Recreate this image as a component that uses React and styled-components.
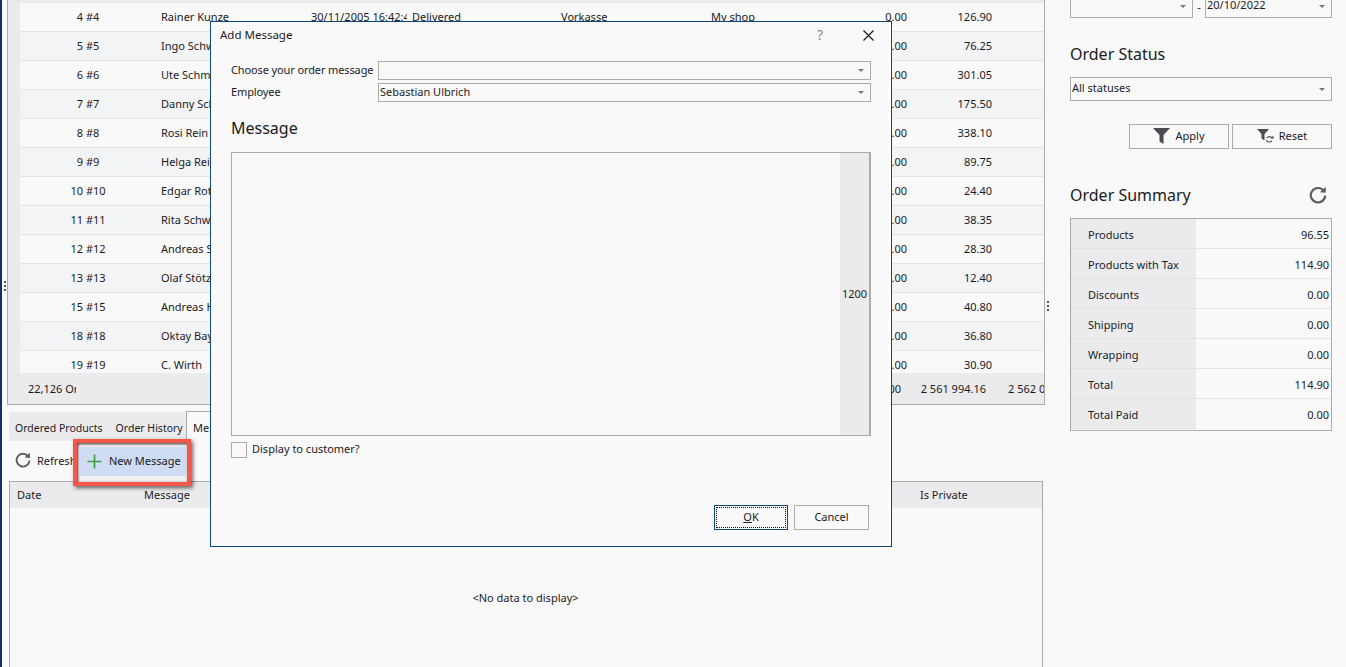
import React from 'react'
import styled, { createGlobalStyle } from 'styled-components'

const GlobalStyle = createGlobalStyle`
    html, body {
        margin: 0;
        height: 100%;
        overflow: hidden;
        background: #f9f9f9;
    }
    body {
        font-family: "Noto Sans", "Open Sans", sans-serif;
        font-size: 11px;
        color: #1b1b1f;
    }
`

const Shell = styled.div`
    position: relative;
    display: flex;
    width: 1346px;
    height: 667px;
    box-sizing: border-box;
    border-left: 2px solid #10305f;
    overflow: hidden;
`
const Gutter = styled.div`
    flex: none;
    width: ${({size})=>size}px;
    display: flex;
    justify-content: ${({align})=>align};
    padding-top: ${({gripTop})=>gripTop}px;
    box-sizing: border-box;
`
const Grip = styled.div`
    width: 2px;
    height: 10px;
    margin-left: ${({offset})=>offset || 0}px;
    background: repeating-linear-gradient(to bottom, #55555a 0 2px, transparent 2px 4px);
`
const Main = styled.div`
    flex: none;
    width: 1038px;
    display: flex;
    flex-direction: column;
`
const GridPanel = styled.div`
    height: 405px;
    flex: none;
    box-sizing: border-box;
    border: 1px solid #ababab;
    border-top: 0;
    background: #ebebed;
    display: flex;
    flex-direction: column;
    padding-top: 3px;
`
const GridRows = styled.div`
    height: 370px;
    flex: none;
    margin-left: 12px;
    overflow: hidden;
`
const Row = styled.div`
    display: grid;
    grid-template-columns: 136px 150px 101px 149px 150px 120px 85px 85px 1fr;
    height: 29px;
    box-sizing: border-box;
    align-items: center;
    padding-bottom: 1px;
    border-bottom: 1px solid #e2e2e2;
    background: ${({even})=>even ? '#f3f4f6' : '#f9f9f9'};
`
const Cell = styled.div`
    white-space: nowrap;
    overflow: hidden;
    padding: 0 ${({right})=>right ? '4px' : '0'} 0 ${({right})=>right ? '0' : '5px'};
    text-align: ${({right})=>right ? 'right' : 'left'};
`
const IdCell = styled.div`
    text-align: center;
    white-space: nowrap;
`
const GridFooter = styled.div`
    flex: 1;
    display: grid;
    grid-template-columns: 48px 825px 85px 22px 1fr;
    align-items: center;
    padding-left: 20px;
    white-space: nowrap;
`
const FooterCell = styled.div`
    overflow: hidden;
    text-align: ${({right})=>right ? 'right' : 'left'};
`
const TabBar = styled.div`
    display: flex;
    margin: 7px 0 0 2px;
    height: 29px;
    flex: none;
    white-space: nowrap;
`
const TabGroup = styled.div`
    display: flex;
    align-items: center;
    width: 177px;
    background: #ebebed;
    box-sizing: border-box;
    padding: 2px 0 0 6px;
    gap: 13px;
    font-size: 10.5px;
`
const ActiveTab = styled.div`
    width: 70px;
    margin-top: -1px;
    padding: 1px 0 0 6px;
    box-sizing: border-box;
    border: 1px solid #ababab;
    border-bottom: 0;
    background: #f9f9f9;
    display: flex;
    align-items: center;
`
const Toolbar = styled.div`
    display: flex;
    height: 40px;
    flex: none;
    margin-left: 2px;
`
const RefreshButton = styled.div`
    width: 64px;
    padding: 0 0 2px 6px;
    box-sizing: border-box;
    display: flex;
    align-items: center;
    gap: 6px;
    overflow: hidden;
    white-space: nowrap;
`
const Callout = styled.div`
    flex: none;
    position: relative;
    z-index: 2;
    width: 118px;
    height: 47px;
    margin-top: -2px;
    box-sizing: border-box;
    border: 4px solid #f4574b;
    padding: 4px 1px 6px 2px;
    background: #f2f2f2;
    box-shadow: inset 1px 1px 3px #333, 2px 2px 4px rgba(0, 0, 0, 0.6);
`
const NewMessage = styled.div`
    height: 100%;
    display: flex;
    align-items: center;
    gap: 7px;
    padding-left: 8px;
    background: #cfdcf3;
    white-space: nowrap;
`
const RaisedText = styled.span`
    padding-bottom: 2px;
`
const DataGrid = styled.div`
    flex: 1;
    margin: 0 2px 0 2px;
    border: 1px solid #ababab;
    border-bottom: 0;
    display: flex;
    flex-direction: column;
`
const DataHeader = styled.div`
    display: grid;
    grid-template-columns: 127px 776px 1fr;
    height: 26px;
    flex: none;
    padding: 0 0 1px 7px;
    box-sizing: border-box;
    align-items: center;
    background: #ebebed;
`
const EmptyText = styled.div`
    margin-top: 82px;
    padding-right: 1px;
    text-align: center;
`
const Side = styled.div`
    flex: none;
    width: 262px;
    display: flex;
    flex-direction: column;
`
const DateRow = styled.div`
    display: flex;
    align-items: center;
    margin-top: -6px;
    height: 24px;
    flex: none;
`
const Dash = styled.span`
    width: 12px;
    text-align: center;
`
const Combo = styled.div`
    display: flex;
    align-items: center;
    box-sizing: border-box;
    width: ${({width})=>width ? `${width}px` : 'auto'};
    height: ${({height})=>height || 24}px;
    flex: none;
    margin-top: ${({top})=>top || 0}px;
    border: 1px solid #ababab;
    padding: 0 6px 2px 1px;
    white-space: nowrap;
`
const ComboText = styled.span`
    flex: 1;
    margin-top: ${({lift})=>lift ? '-2px' : '0'};
`
const Caret = styled.span`
    width: 0;
    height: 0;
    margin-top: 2px;
    border-left: 3.5px solid transparent;
    border-right: 3.5px solid transparent;
    border-top: 3.5px solid #77777b;
`
const Heading = styled.h2`
    margin: ${({top})=>top}px 0 0;
    font-size: 16px;
    font-weight: 400;
    line-height: 24px;
`
const ButtonRow = styled.div`
    display: flex;
    justify-content: flex-end;
    gap: 3px;
    margin-top: 23px;
`
const SideButton = styled.div`
    width: 100px;
    height: 25px;
    box-sizing: border-box;
    border: 1px solid #ababab;
    display: flex;
    align-items: center;
    justify-content: center;
    gap: 5px;
    padding-bottom: 1px;
`
const SummaryHead = styled.div`
    display: flex;
    justify-content: space-between;
    align-items: center;
    margin-top: 34px;
    padding-right: 5px;
`
const SummaryTable = styled.div`
    margin-top: 11px;
    border: 1px solid #ababab;
    height: 213px;
    box-sizing: border-box;
`
const SummaryRow = styled.div`
    display: grid;
    grid-template-columns: 125px 1fr;
    height: 30px;
    align-items: stretch;
    box-shadow: inset 0 -1px 0 ${({last})=>last ? 'transparent' : '#e2e2e2'};
`
const SummaryLabel = styled.div`
    display: flex;
    align-items: center;
    padding-left: 17px;
    background: #ebebed;
    box-shadow: inset 0 -1px 0 #e2e2e2;
`
const SummaryValue = styled.div`
    display: flex;
    align-items: center;
    justify-content: flex-end;
    padding-right: 2px;
`
const Modal = styled.div`
    position: absolute;
    left: 208px;
    top: 21px;
    width: 682px;
    height: 526px;
    box-sizing: border-box;
    border: 1px solid #11467c;
    background: #f9f9f9;
    box-shadow: inset -2px -2px 0 #ffffff;
    display: flex;
    flex-direction: column;
    z-index: 3;
`
const ModalHeader = styled.div`
    display: flex;
    align-items: center;
    height: 24px;
    padding: 0 17px 0 9px;
    flex: none;
`
const ModalTitle = styled.span`
    flex: 1;
    font-size: 11.5px;
`
const HelpMark = styled.span`
    color: #8a8a8a;
    font-size: 14px;
    margin-right: 40px;
`
const CloseWrap = styled.span`
    display: flex;
    margin-top: 2px;
`
const ModalBody = styled.div`
    padding: 15px 20px 0;
    display: flex;
    flex-direction: column;
`
const FormGrid = styled.div`
    display: grid;
    grid-template-columns: 147px 1fr;
    row-gap: 3px;
    align-items: center;
    white-space: nowrap;
`
const FormLabel = styled.span`
    padding-bottom: 2px;
    letter-spacing: -0.12px;
`
const MessageBox = styled.div`
    margin-top: 12px;
    height: 284px;
    box-sizing: border-box;
    border: 1px solid #ababab;
    border-right-width: 2px;
    display: flex;
    justify-content: flex-end;
`
const Counter = styled.div`
    width: 29px;
    background: #ebebed;
    display: flex;
    align-items: center;
    justify-content: center;
    padding-bottom: 2px;
    box-sizing: border-box;
`
const CheckRow = styled.div`
    display: flex;
    align-items: center;
    gap: 5px;
    margin-top: 5px;
`
const CheckBox = styled.div`
    width: 16px;
    height: 16px;
    box-sizing: border-box;
    border: 1px solid #ababab;
`
const DialogButtons = styled.div`
    display: flex;
    justify-content: flex-end;
    gap: 6px;
    margin: 47px 2px 0 0;
`
const DialogButton = styled.div`
    width: ${({primary})=>primary ? 74 : 75}px;
    height: 25px;
    box-sizing: border-box;
    border: 1px solid ${({primary})=>primary ? '#11467c' : '#ababab'};
    display: flex;
    align-items: center;
    justify-content: center;
    padding: 1px;
`
const FocusRing = styled.div`
    width: 100%;
    height: 100%;
    box-sizing: border-box;
    border: 1px dotted #111;
    display: flex;
    align-items: center;
    justify-content: center;
`
const Key = styled.span`
    text-decoration: underline;
`

const rows = [
    [4, 'Rainer Kunze', '126.90'],
    [5, 'Ingo Schw', '76.25'],
    [6, 'Ute Schm', '301.05'],
    [7, 'Danny Sch', '175.50'],
    [8, 'Rosi Rein', '338.10'],
    [9, 'Helga Rei', '89.75'],
    [10, 'Edgar Rot', '24.40'],
    [11, 'Rita Schw', '38.35'],
    [12, 'Andreas S', '28.30'],
    [13, 'Olaf Stötz', '12.40'],
    [15, 'Andreas H', '40.80'],
    [18, 'Oktay Bay', '36.80'],
    [19, 'C. Wirth', '30.90'],
]

const summary = [
    ['Products', '96.55'],
    ['Products with Tax', '114.90'],
    ['Discounts', '0.00'],
    ['Shipping', '0.00'],
    ['Wrapping', '0.00'],
    ['Total', '114.90'],
    ['Total Paid', '0.00'],
]

function RefreshIcon({size = 16}) {
    return (
        <svg width={size} height={size} viewBox="0 0 16 16" fill="none" style={{flex: 'none'}}>
            <path d="M13 4.2A6.4 6.4 0 1 0 14.4 8.6" stroke="#5c5c60" strokeWidth="1.9" />
            <polygon points="9.6,5.6 14.9,5.9 14.9,0.8" fill="#5c5c60" />
        </svg>
    )
}

function PlusIcon() {
    return (
        <svg width="15" height="15" viewBox="0 0 15 15" style={{flex: 'none'}}>
            <path d="M7.5 0.5V14.5M0.5 7.5H14.5" stroke="#3aa23f" strokeWidth="1.7" />
        </svg>
    )
}

function FilterIcon() {
    return (
        <svg width="17" height="16" viewBox="0 0 17 16" style={{flex: 'none'}}>
            <polygon points="0,0 17,0 10.5,7 10.5,16 6.5,13.5 6.5,7" fill="#4a4a50" />
        </svg>
    )
}

function FilterResetIcon() {
    return (
        <svg width="17" height="16" viewBox="0 0 17 16" style={{flex: 'none'}}>
            <polygon points="0,1 12,1 7.5,6 7.5,12.5 4.5,10.5 4.5,6" fill="#4a4a50" />
            <path d="M15.4 10.3A3.3 3.3 0 0 0 9.7 10.3M9.3 12.2A3.3 3.3 0 0 0 15 12.6" stroke="#4a4a50" strokeWidth="1.1" fill="none" />
            <polygon points="13.4,10.6 16.6,10.6 16.6,7.6" fill="#4a4a50" />
        </svg>
    )
}

function CloseIcon() {
    return (
        <svg width="11" height="11" viewBox="0 0 11 11" style={{flex: 'none'}}>
            <path d="M0.5 0.5L10.5 10.5M10.5 0.5L0.5 10.5" stroke="#1b1b1f" strokeWidth="1.2" />
        </svg>
    )
}

function App() {
    return (
        <Shell>
            <GlobalStyle />
            <Gutter size={5} align="center" gripTop={281}><Grip /></Gutter>
            <Main>
                <GridPanel>
                    <GridRows>
                        {rows.map(([id, name, total], index)=>(
                            <Row key={id} even={index % 2 === 1}>
                                <IdCell>{id} #{id}</IdCell>
                                <Cell>{name}</Cell>
                                <Cell>{id === 4 && '30/11/2005 16:42:47'}</Cell>
                                <Cell>{id === 4 && 'Delivered'}</Cell>
                                <Cell>{id === 4 && 'Vorkasse'}</Cell>
                                <Cell>{id === 4 && 'My shop'}</Cell>
                                <Cell right>0.00</Cell>
                                <Cell right>{total}</Cell>
                                <Cell />
                            </Row>
                        ))}
                    </GridRows>
                    <GridFooter>
                        <FooterCell>22,126 Or</FooterCell>
                        <FooterCell right>0.00</FooterCell>
                        <FooterCell right>2 561 994.16</FooterCell>
                        <FooterCell />
                        <FooterCell>2 562 094</FooterCell>
                    </GridFooter>
                </GridPanel>
                <TabBar>
                    <TabGroup>
                        <span>Ordered Products</span>
                        <span>Order History</span>
                    </TabGroup>
                    <ActiveTab>Messages</ActiveTab>
                </TabBar>
                <Toolbar>
                    <RefreshButton><RefreshIcon />Refresh</RefreshButton>
                    <Callout>
                        <NewMessage><PlusIcon /><RaisedText>New Message</RaisedText></NewMessage>
                    </Callout>
                </Toolbar>
                <DataGrid>
                    <DataHeader>
                        <span>Date</span>
                        <span>Message</span>
                        <span>Is Private</span>
                    </DataHeader>
                    <EmptyText>&lt;No data to display&gt;</EmptyText>
                </DataGrid>
            </Main>
            <Gutter size={25} align="flex-start" gripTop={301}>
                <Grip offset={2} />
            </Gutter>
            <Side>
                <DateRow>
                    <Combo width={123}><ComboText /><Caret /></Combo>
                    <Dash>-</Dash>
                    <Combo width={127}><ComboText lift>20/10/2022</ComboText><Caret /></Combo>
                </DateRow>
                <Heading top={24}>Order Status</Heading>
                <Combo top={11}><ComboText lift>All statuses</ComboText><Caret /></Combo>
                <ButtonRow>
                    <SideButton><FilterIcon /><RaisedText>Apply</RaisedText></SideButton>
                    <SideButton><FilterResetIcon /><RaisedText>Reset</RaisedText></SideButton>
                </ButtonRow>
                <SummaryHead>
                    <Heading top={0}>Order Summary</Heading>
                    <RefreshIcon size={18} />
                </SummaryHead>
                <SummaryTable>
                    {summary.map(([label, value], index)=>(
                        <SummaryRow key={label} last={index === summary.length - 1}>
                            <SummaryLabel>{label}</SummaryLabel>
                            <SummaryValue>{value}</SummaryValue>
                        </SummaryRow>
                    ))}
                </SummaryTable>
            </Side>
            <Modal>
                <ModalHeader>
                    <ModalTitle>Add Message</ModalTitle>
                    <HelpMark>?</HelpMark>
                    <CloseWrap><CloseIcon /></CloseWrap>
                </ModalHeader>
                <ModalBody>
                    <FormGrid>
                        <FormLabel>Choose your order message</FormLabel>
                        <Combo height={19}><ComboText /><Caret /></Combo>
                        <FormLabel>Employee</FormLabel>
                        <Combo height={19}><ComboText>Sebastian Ulbrich</ComboText><Caret /></Combo>
                    </FormGrid>
                    <Heading top={14}>Message</Heading>
                    <MessageBox><Counter>1200</Counter></MessageBox>
                    <CheckRow>
                        <CheckBox />
                        <RaisedText>Display to customer?</RaisedText>
                    </CheckRow>
                    <DialogButtons>
                        <DialogButton primary><FocusRing><RaisedText><Key>O</Key>K</RaisedText></FocusRing></DialogButton>
                        <DialogButton><RaisedText>Cancel</RaisedText></DialogButton>
                    </DialogButtons>
                </ModalBody>
            </Modal>
        </Shell>
    )
}

export default App
